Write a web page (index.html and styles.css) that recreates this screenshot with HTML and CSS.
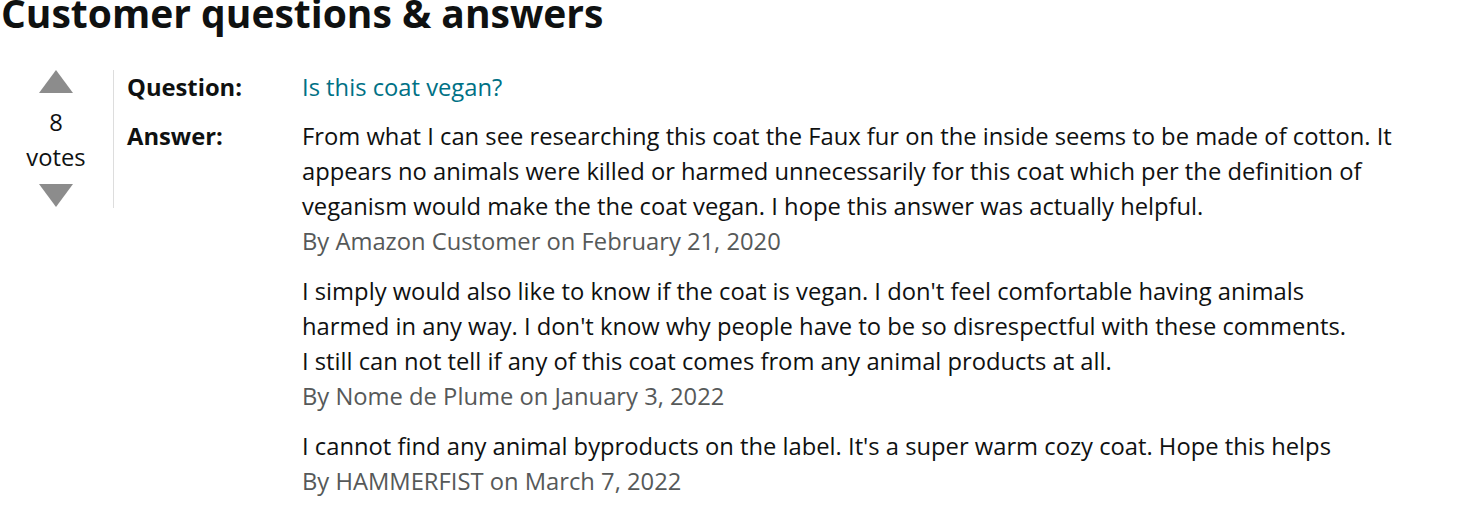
FILE: index.html
```html
<!DOCTYPE html>
<html><head><link rel="stylesheet" href="styles.css"></head><body>
<h2 class="title">Customer questions &amp; answers</h2>
<div class="qa">
  <div class="vote">
    <svg class="arrow" width="34" height="23" viewBox="0 0 34 23"><polygon points="17,0 34,23 0,23" fill="#8c8c8c"/></svg>
    <div class="count">8</div>
    <div class="label">votes</div>
    <svg class="arrow down" width="34" height="23" viewBox="0 0 34 23"><polygon points="0,0 34,0 17,23" fill="#8c8c8c"/></svg>
  </div>
  <div class="content">
    <div class="row q">
      <div class="key">Question:</div>
      <div class="val"><a class="qlink">Is this coat vegan?</a></div>
    </div>
    <div class="row">
      <div class="key">Answer:</div>
      <div class="val">
        <div class="answer">
          <p>From what I can see researching this coat the Faux fur on the inside seems to be made of cotton. It appears no animals were killed or harmed unnecessarily for this coat which per the definition of veganism would make the the coat vegan. I hope this answer was actually helpful.</p>
          <p class="by">By Amazon Customer on February 21, 2020</p>
        </div>
        <div class="answer">
          <p>I simply would also like to know if the coat is vegan. I don't feel comfortable having animals harmed in any way. I don't know why people have to be so disrespectful with these comments.<br>I still can not tell if any of this coat comes from any animal products at all.</p>
          <p class="by">By Nome de Plume on January 3, 2022</p>
        </div>
        <div class="answer">
          <p>I cannot find any animal byproducts on the label. It's a super warm cozy coat. Hope this helps</p>
          <p class="by">By HAMMERFIST on March 7, 2022</p>
        </div>
      </div>
    </div>
  </div>
</div>
</body></html>
```
FILE: styles.css
```css
body{margin:0;font-family:"Open Sans",sans-serif;color:#0f1111;background:#fff;}
.title{margin:-13px 0 0 1px;font-size:39px;line-height:52px;font-weight:700;letter-spacing:0;}
.qa{display:flex;align-items:flex-start;margin-top:31px;}
.vote{width:66px;height:138px;margin-left:23px;padding-right:24px;border-right:1px solid #dddddd;display:flex;flex-direction:column;align-items:center;padding-top:0;box-sizing:content-box;}
.count,.label{font-size:23.76px;line-height:35px;}
.count{margin-top:12px;}
.arrow{display:block;flex:none;}
.arrow.down{margin-top:9px;}
.content{padding-left:13px;}
.row{display:flex;font-size:23.76px;line-height:35px;}
.row.q{margin-bottom:14px;}
.key{width:175px;flex:none;font-weight:700;}
.val{width:1095px;}
.qlink{color:#007185;text-decoration:none;}
.answer{margin-bottom:15px;}
.answer p{margin:0;}
.by{color:#565959;}
```
